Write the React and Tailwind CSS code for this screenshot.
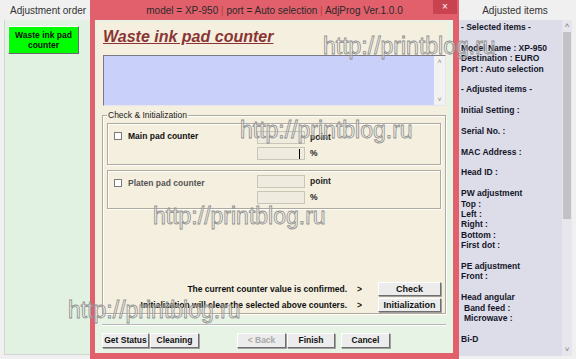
import React from "react";

function Btn({ children, className = "", disabled = false }) {
  return (
    <div
      className={
        "flex items-center justify-center bg-[#ececec] border border-t-white border-l-white border-r-[#6f6f6f] border-b-[#6f6f6f] shadow-[1px_1px_0_#a0a0a0] text-[8.5px] font-bold leading-none " +
        (disabled ? "text-[#a8a8a8] " : "text-[#111] ") +
        className
      }
    >
      {children}
    </div>
  );
}

function Check() {
  return <div className="w-[8px] h-[8px] bg-white border border-[#7a7a7a] shrink-0" />;
}

function Field({ cursor = false }) {
  return (
    <div className="w-[48px] h-[13px] bg-[#efebdf] border border-[#c9c5b8] flex justify-end items-center pr-[4px]">
      {cursor && <div className="w-[1px] h-[10px] bg-black" />}
    </div>
  );
}

function Watermark({ className }) {
  return (
    <div
      className={
        "absolute text-[23px] leading-[23px] whitespace-nowrap text-[rgba(255,255,255,0.35)] [-webkit-text-stroke:0.8px_#8d8d8d] pointer-events-none " +
        className
      }
    >
      http://printblog.ru
    </div>
  );
}

const items = [
  "- Selected items -",
  "",
  "Model Name : XP-950",
  "Destination : EURO",
  "Port : Auto selection",
  "",
  "- Adjusted items -",
  "",
  "Initial Setting :",
  "",
  "Serial No. :",
  "",
  "MAC Address :",
  "",
  "Head ID :",
  "",
  "PW adjustment",
  "Top :",
  "Left :",
  "Right :",
  "Bottom :",
  "First dot :",
  "",
  "PE adjustment",
  "Front :",
  "",
  "Head angular",
  " Band feed :",
  " Microwave :",
  "",
  "Bi-D",
];

const etched = "border border-[#aeaa9c] shadow-[inset_1px_1px_0_#fff,1px_1px_0_#fff]";

export default function App() {
  return (
    <div className="w-[576px] h-[359px] flex bg-[#f0f0f0] relative overflow-hidden font-['Liberation_Sans',Arial,sans-serif] text-black">
      {/* Left column */}
      <div className="w-[90px] flex flex-col shrink-0">
        <div className="h-[20px] flex items-center pl-[10px] text-[10px] text-[#333] whitespace-nowrap">
          Adjustment order
        </div>
        <div className="flex-1 ml-[4px] mb-[4px] bg-[#e2f2e2] border-l border-b border-[#d4d4d4] pt-[6px] pl-[3px]">
          <div className="w-[71px] h-[28px] bg-[#00ff00] border border-t-white border-l-white border-r-[#6a6a6a] border-b-[#6a6a6a] flex flex-col items-center justify-center text-[8.5px] font-bold leading-[10px] text-[#111]">
            <span>Waste ink pad</span>
            <span>counter</span>
          </div>
        </div>
      </div>

      {/* Dialog */}
      <div className="w-[369px] shrink-0 bg-[#e2606c] flex flex-col">
        <div className="h-[20px] relative flex items-center justify-center text-[10px] text-[#2a2a2a] whitespace-nowrap">
          <span>
            model = XP-950 <span className="text-[#b8402a]">|</span> port = Auto selection{" "}
            <span className="text-[#b8402a]">|</span> AdjProg Ver.1.0.0
          </span>
          <div className="absolute right-[2px] top-0 w-[24px] h-[14px] bg-[#c8424f] flex items-center justify-center text-white text-[10px] leading-none">
            ×
          </div>
        </div>
        <div className="flex-1 ml-[5px] mr-[6px] mb-[6px] bg-[#e7f3e4] flex flex-col">
          {/* beige panel */}
          <div className="mt-[2px] ml-[2px] w-[350px] h-[294px] bg-[#f4efdf] flex flex-col">
            <div className="mt-[5px] ml-[6px] h-[20px] leading-[20px] text-[16px] font-bold italic underline text-[#8a3434]">
              Waste ink pad counter
            </div>
            <div className="mt-[8px] ml-[6px] w-[343px] h-[51px] bg-[#c9d1fb] border border-t-[#7a7a86] border-l-[#7a7a86] border-r-[#e6e6ee] border-b-[#e6e6ee] flex justify-end">
              <div className="w-[11px] bg-[#f2f2f2] flex flex-col justify-between items-center text-[7px] text-[#888] leading-none py-[2px]">
                <span>˄</span>
                <span>˅</span>
              </div>
            </div>
            {/* group box */}
            <div className={"mt-[9px] ml-[5px] w-[344px] flex-1 mb-[2px] flex flex-col " + etched}>
              <div className="-mt-[6px] ml-[4px] self-start px-[1px] bg-[#f4efdf] text-[8.5px] leading-[10px] text-[#222]">
                Check &amp; Initialization
              </div>
              {/* main pad */}
              <div className={"mt-[3px] ml-[4px] w-[334px] h-[42px] flex " + etched}>
                <div className="w-[149px] pl-[6px] pt-[7px] flex items-center self-start gap-[6px]">
                  <Check />
                  <span className="text-[8.5px] font-bold leading-[10px] text-[#111]">Main pad counter</span>
                </div>
                <div className="pt-[7px] flex flex-col gap-[3px]">
                  <div className="flex items-center gap-[5px]">
                    <Field />
                    <span className="text-[8.5px] font-bold text-[#222]">point</span>
                  </div>
                  <div className="flex items-center gap-[5px]">
                    <Field cursor />
                    <span className="text-[8.5px] font-bold text-[#222]">%</span>
                  </div>
                </div>
              </div>
              {/* platen pad */}
              <div className={"mt-[5px] ml-[4px] w-[334px] h-[39px] flex " + etched}>
                <div className="w-[149px] pl-[6px] pt-[7px] flex items-center self-start gap-[6px]">
                  <Check />
                  <span className="text-[8.5px] font-bold leading-[10px] text-[#555]">Platen pad counter</span>
                </div>
                <div className="pt-[4px] flex flex-col gap-[3px]">
                  <div className="flex items-center gap-[5px]">
                    <Field />
                    <span className="text-[8.5px] font-bold text-[#222]">point</span>
                  </div>
                  <div className="flex items-center gap-[5px]">
                    <Field />
                    <span className="text-[8.5px] font-bold text-[#222]">%</span>
                  </div>
                </div>
              </div>
              <div className="flex-1" />
              <div className="flex flex-col gap-[2px] mb-[1px] mr-[4px]">
                <div className="flex items-center justify-end gap-[16px]">
                  <span className="text-[8.5px] font-bold text-[#111] whitespace-nowrap">
                    The current counter value is confirmed.<span className="ml-[10px]">&gt;</span>
                  </span>
                  <Btn className="w-[63px] h-[14px] text-[9px]">Check</Btn>
                </div>
                <div className="flex items-center justify-end gap-[16px]">
                  <span className="text-[8.5px] font-bold text-[#111] whitespace-nowrap">
                    Initialization will clear the selected above counters.<span className="ml-[10px]">&gt;</span>
                  </span>
                  <Btn className="w-[63px] h-[14px] text-[9px]">Initialization</Btn>
                </div>
              </div>
            </div>
          </div>
          {/* separator */}
          <div className="mt-[8px] ml-[7px] w-[344px] h-[2px] border-t border-[#b8b8b8] border-b border-b-white" />
          <div className="mt-[7px] ml-[7px] flex">
            <Btn className="w-[47px] h-[15px]">Get Status</Btn>
            <Btn className="ml-[1px] w-[49px] h-[15px]">Cleaning</Btn>
            <Btn className="ml-[38px] w-[49px] h-[15px]" disabled>
              &lt; Back
            </Btn>
            <Btn className="ml-[1px] w-[48px] h-[15px]">Finish</Btn>
            <Btn className="ml-[6px] w-[49px] h-[15px]">Cancel</Btn>
          </div>
        </div>
      </div>

      {/* Right column */}
      <div className="flex-1 flex flex-col">
        <div className="h-[20px] flex items-center justify-center pr-[5px] text-[10px] text-[#333] whitespace-nowrap">
          Adjusted items
        </div>
        <div className="flex-1 flex mb-[3px] mr-[4px]">
          <div className="flex-1 bg-[#dcdde8] pl-[2px] pt-[2px] overflow-hidden">
            {items.map((t, i) => (
              <div
                key={i}
                className={
                  "h-[10.4px] leading-[10.4px] text-[8.5px] font-bold text-[#15152a] whitespace-nowrap " +
                  (t.startsWith(" ") ? "pl-[3px]" : "")
                }
              >
                {t.trim()}
              </div>
            ))}
          </div>
          <div className="w-[10px] bg-[#e6e6ec] flex flex-col">
            <div className="h-[12px] flex items-center justify-center text-[8px] text-[#777] leading-none">˄</div>
            <div className="h-[187px] mx-[1px] bg-[#c2c2c6]" />
            <div className="flex-1" />
            <div className="h-[12px] flex items-center justify-center text-[8px] text-[#777] leading-none">˅</div>
          </div>
        </div>
      </div>

      <Watermark className="left-[323px] top-[35px]" />
      <Watermark className="left-[240px] top-[119px]" />
      <Watermark className="left-[153px] top-[205px]" />
      <Watermark className="left-[68px] top-[299px]" />
    </div>
  );
}
